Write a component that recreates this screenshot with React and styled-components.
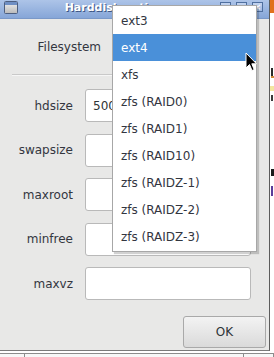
import React from "react";
import styled, { createGlobalStyle } from "styled-components";

const Global = createGlobalStyle`
  html, body { margin: 0; padding: 0; background: #ffffff; }
  body { font-family: "DejaVu Sans", "Liberation Sans", sans-serif; font-size: 12px; color: #2e3436; }
  * { box-sizing: border-box; }
`;

const Screen = styled.div`
  position: relative;
  width: 274px;
  height: 357px;
  overflow: hidden;
  display: flex;
  flex-direction: column;
  background: #f4f4f4;
`;

const TopArea = styled.div`
  display: flex;
  height: 351px;
`;

const Window = styled.div`
  width: 270px;
  height: 351px;
  display: flex;
  flex-direction: column;
  background: #e8e8e7;
  border-right: 1px solid #5c5c5c;
  border-bottom: 1px solid #7a7a7a;
`;

const TitleBar = styled.div`
  height: 19px;
  flex: none;
  display: flex;
  align-items: center;
  padding: 0 6px 0 4px;
  background: linear-gradient(#adc4e8, #86a6d8);
  border-bottom: 1px solid #7a98c8;
`;

const Title = styled.div`
  flex: 1;
  text-align: center;
  font-family: "DejaVu Sans", sans-serif;
  font-weight: bold;
  font-size: 11px;
  color: #ffffff;
  text-shadow: 1px 1px 0 #3d5684;
  white-space: nowrap;
  overflow: hidden;
  padding-right: 3px;
  margin-top: -3px;
`;

const TitleButtons = styled.div`
  display: flex;
  gap: 5px;
  margin-top: -4px;
`;

const TitleButton = styled.div`
  width: 11px;
  height: 10px;
  border: 1px solid #4f6f9f;
  background: linear-gradient(#c3d4ef, #9db8e2);
  display: flex;
  align-items: center;
  justify-content: center;
  color: #ffffff;
  font-size: 9px;
  font-weight: bold;
  line-height: 1;
`;

const Body = styled.div`
  flex: 1;
  display: flex;
  flex-direction: column;
  padding: 11px 3px 2px 12px;
`;

const FsRow = styled.div`
  display: grid;
  grid-template-columns: 89px 144px;
  column-gap: 11px;
  align-items: center;
  height: 34px;
`;

const Label = styled.div`
  text-align: right;
  font-size: 12px;
  color: #33363f;
  white-space: nowrap;
`;

const Combo = styled.div`
  height: 34px;
  border: 1px solid #b4b4b4;
  border-radius: 3px;
  background: linear-gradient(#f6f6f6, #e2e2e2);
`;

const Separator = styled.div`
  margin: 10px 9px 0 0;
  height: 1px;
  background: #c9c9c9;
  box-shadow: 0 1px 0 #f6f6f6;
`;

const Form = styled.div`
  margin-top: 14px;
  display: grid;
  grid-template-columns: 61px 166px;
  grid-auto-rows: 33px;
  column-gap: 12px;
  row-gap: 11.5px;
  align-items: center;
`;

const Input = styled.div`
  height: 33px;
  border: 1px solid #b9b9b9;
  border-radius: 3px;
  background: #ffffff;
  display: flex;
  align-items: center;
  padding-left: 7px;
  font-size: 12px;
  color: #2e3436;
`;

const Footer = styled.div`
  margin-top: auto;
  display: flex;
  justify-content: flex-end;
`;

const Button = styled.div`
  width: 83px;
  height: 32px;
  border: 1px solid #a9a9a9;
  border-radius: 3px;
  background: linear-gradient(#f3f3f3, #dadada);
  display: flex;
  align-items: center;
  justify-content: center;
  font-size: 12px;
  color: #2e3436;
`;

const SideStrip = styled.div`
  width: 4px;
  display: flex;
  flex-direction: column;
  background: #ffffff;
  overflow: hidden;
`;

const SideMark = styled.div`
  height: ${(p) => p.h}px;
  margin-top: ${(p) => p.gap || 0}px;
  width: ${(p) => p.w || 4}px;
  margin-left: ${(p) => p.x || 0}px;
  background: ${(p) => p.bg};
`;

const BottomStrip = styled.div`
  flex: 1;
  display: flex;
  background: #f7f7f7;
  border-top: 2px solid #ffffff;
`;

const BottomCell = styled.div`
  width: ${(p) => p.w}px;
  border-top: 1px solid #8c8c8c;
  border-right: 1px solid #8c8c8c;
`;

const Menu = styled.div`
  position: absolute;
  left: 112px;
  top: 5px;
  width: 145px;
  padding: 1px 0;
  background: #ffffff;
  border: 1px solid #a7a7a7;
  box-shadow: 2px 2px 1px rgba(0, 0, 0, 0.18);
  display: flex;
  flex-direction: column;
`;

const MenuItem = styled.div`
  height: 27px;
  display: flex;
  align-items: center;
  padding-left: 8px;
  font-size: 12px;
  background: ${(p) => (p.$active ? "#4a90d9" : "transparent")};
  color: ${(p) => (p.$active ? "#ffffff" : "#33363f")};
`;

const Cursor = styled.svg`
  position: absolute;
  left: 245px;
  top: 52px;
`;

function WindowIcon() {
  return (
    <svg width="14" height="13" viewBox="0 0 14 13" style={{ marginTop: -4 }}>
      <defs>
        <linearGradient id="wi" x1="0" y1="0" x2="0" y2="1">
          <stop offset="0" stopColor="#f2f2f2" />
          <stop offset="1" stopColor="#b9b9b9" />
        </linearGradient>
      </defs>
      <rect x="0.5" y="0.5" width="13" height="12" rx="1" fill="url(#wi)" stroke="#4d5f80" />
      <rect x="1" y="1" width="12" height="3" fill="#6f8fc4" />
    </svg>
  );
}

const rows = [
  { label: "hdsize", value: "500" },
  { label: "swapsize", value: "" },
  { label: "maxroot", value: "" },
  { label: "minfree", value: "" },
  { label: "maxvz", value: "" },
];

const items = [
  "ext3",
  "ext4",
  "xfs",
  "zfs (RAID0)",
  "zfs (RAID1)",
  "zfs (RAID10)",
  "zfs (RAIDZ-1)",
  "zfs (RAIDZ-2)",
  "zfs (RAIDZ-3)",
];

export default function App() {
  return (
    <>
      <Global />
      <Screen>
        <TopArea>
          <Window>
            <TitleBar>
              <WindowIcon />
              <Title>Harddisk options</Title>
              <TitleButtons>
                <TitleButton />
                <TitleButton />
                <TitleButton>×</TitleButton>
              </TitleButtons>
            </TitleBar>
            <Body>
              <FsRow>
                <Label>Filesystem</Label>
                <Combo />
              </FsRow>
              <Separator />
              <Form>
                {rows.map((r) => (
                  <React.Fragment key={r.label}>
                    <Label>{r.label}</Label>
                    <Input>{r.value}</Input>
                  </React.Fragment>
                ))}
              </Form>
              <Footer>
                <Button>OK</Button>
              </Footer>
            </Body>
          </Window>
          <SideStrip>
            <SideMark h={13} bg="#e0701c" />
            <SideMark h={8} gap={55} w={2} x={1} bg="#2a2a2a" />
            <SideMark h={2} gap={0} w={3} x={1} bg="#d08a3a" />
            <SideMark h={5} gap={8} w={4} bg="#f3e6a0" />
            <SideMark h={6} gap={4} w={2} x={1} bg="#3a3a3a" />
            <SideMark h={7} gap={68} w={3} x={1} bg="#1a1a1a" />
            <SideMark h={10} gap={10} w={2} x={1} bg="#5a3d9a" />
          </SideStrip>
        </TopArea>
        <BottomStrip>
          <BottomCell w={25} />
          <BottomCell w={219} />
          <BottomCell w={30} />
        </BottomStrip>
        <Menu>
          {items.map((it) => (
            <MenuItem key={it} $active={it === "ext4"}>
              {it}
            </MenuItem>
          ))}
        </Menu>
        <Cursor width="13" height="21" viewBox="0 0 13 21">
          <path
            d="M1 1 L1 16 L4.5 12.5 L7 18.5 L9.2 17.6 L6.8 11.8 L11.5 11.8 Z"
            fill="#000"
            stroke="#fff"
            strokeWidth="1"
            strokeLinejoin="round"
          />
        </Cursor>
      </Screen>
    </>
  );
}
